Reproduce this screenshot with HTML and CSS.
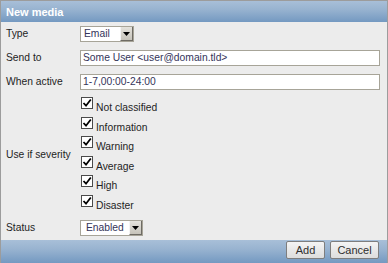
FILE: index.html
```html
<!DOCTYPE html>
<html lang="en">
<head>
    <meta charset="UTF-8">
    <title>New media</title>
    <link rel="stylesheet" href="styles.css">
</head>
<body>
    <div class="dialog">
        <div class="dialog-head">New media</div>

        <div class="dialog-body">
            <div class="row">
                <div class="label">Type</div>
                <div class="field">
                    <div class="select select-type">
                        <span class="select-value">Email</span>
                        <span class="select-btn"><svg width="7" height="4" viewBox="0 0 7 4"><path d="M0 0h7L3.5 4z" fill="#000"/></svg></span>
                    </div>
                </div>
            </div>

            <div class="row">
                <div class="label">Send to</div>
                <div class="field"><div class="text-input">Some User &lt;user@domain.tld&gt;</div></div>
            </div>

            <div class="row">
                <div class="label">When active</div>
                <div class="field"><div class="text-input">1-7,00:00-24:00</div></div>
            </div>

            <div class="row row-severity">
                <div class="label">Use if severity</div>
                <div class="field checks">
                    <div class="check"><span class="box"><svg width="10" height="10" viewBox="0 0 10 10"><path d="M1.5 5l2.5 2.7L8.8 1.5" fill="none" stroke="#000" stroke-width="1.8"/></svg></span><span class="check-text">Not classified</span></div>
                    <div class="check"><span class="box"><svg width="10" height="10" viewBox="0 0 10 10"><path d="M1.5 5l2.5 2.7L8.8 1.5" fill="none" stroke="#000" stroke-width="1.8"/></svg></span><span class="check-text">Information</span></div>
                    <div class="check"><span class="box"><svg width="10" height="10" viewBox="0 0 10 10"><path d="M1.5 5l2.5 2.7L8.8 1.5" fill="none" stroke="#000" stroke-width="1.8"/></svg></span><span class="check-text">Warning</span></div>
                    <div class="check"><span class="box"><svg width="10" height="10" viewBox="0 0 10 10"><path d="M1.5 5l2.5 2.7L8.8 1.5" fill="none" stroke="#000" stroke-width="1.8"/></svg></span><span class="check-text">Average</span></div>
                    <div class="check"><span class="box"><svg width="10" height="10" viewBox="0 0 10 10"><path d="M1.5 5l2.5 2.7L8.8 1.5" fill="none" stroke="#000" stroke-width="1.8"/></svg></span><span class="check-text">High</span></div>
                    <div class="check"><span class="box"><svg width="10" height="10" viewBox="0 0 10 10"><path d="M1.5 5l2.5 2.7L8.8 1.5" fill="none" stroke="#000" stroke-width="1.8"/></svg></span><span class="check-text">Disaster</span></div>
                </div>
            </div>

            <div class="row">
                <div class="label">Status</div>
                <div class="field">
                    <div class="select select-status">
                        <span class="select-value">Enabled</span>
                        <span class="select-btn"><svg width="7" height="4" viewBox="0 0 7 4"><path d="M0 0h7L3.5 4z" fill="#000"/></svg></span>
                    </div>
                </div>
            </div>
        </div>

        <div class="dialog-foot">
            <button class="btn btn-add">Add</button>
            <button class="btn btn-cancel">Cancel</button>
        </div>
    </div>
</body>
</html>
```

FILE: styles.css
```css
* {
    margin: 0;
    padding: 0;
    box-sizing: border-box;
}

body {
    font-family: 'Liberation Sans', Arial, sans-serif;
    font-size: 10.3px;
    color: #1e1e1e;
    background: #ececec;
}

.dialog {
    width: 388px;
    height: 263px;
    border: 1px solid #9c9c9c;
    border-bottom: none;
    background: #ececec;
    display: flex;
    flex-direction: column;
}

.dialog-head {
    height: 24px;
    padding-left: 5px;
    display: flex;
    align-items: center;
    font-size: 11px;
    font-weight: bold;
    color: #fff;
    background: linear-gradient(to bottom, #a8bfd8 0%, #98b3d0 40%, #7499c1 100%);
}

.dialog-body {
    flex: 1;
    padding: 0 7px 0 5px;
}

.row {
    display: grid;
    grid-template-columns: 74px 1fr;
    align-items: center;
    padding: 4px 0;
}

.row-severity {
    padding: 0;
}

.label {
    line-height: 12px;
}

.select {
    display: flex;
    align-items: stretch;
    height: 16px;
    background: #fff;
    border: 1px solid #a7a498;
    color: #34345a;
}

.select-type {
    width: 54px;
}

.select-status {
    width: 63px;
}

.select-value {
    flex: 1;
    padding-left: 3px;
    line-height: 14px;
}

.select-status .select-value {
    padding-left: 5px;
}

.select-btn {
    width: 13px;
    display: flex;
    align-items: center;
    justify-content: center;
    background: linear-gradient(to bottom, #e4e2dc, #c6c3ba);
    border-left: 1px solid #f4f4f4;
    border-right: 1px solid #6e6b64;
    border-bottom: 1px solid #6e6b64;
}

.text-input {
    height: 16px;
    background: #fff;
    border: 1px solid #a7a498;
    padding-left: 2px;
    line-height: 14px;
    color: #34345a;
}

.checks {
    display: flex;
    flex-direction: column;
    padding: 2px 0 3px;
}

.check {
    height: 19.5px;
    display: flex;
    align-items: flex-start;
    gap: 3px;
    padding-left: 1px;
}

.check .box {
    width: 12px;
    height: 12px;
    margin-top: 1px;
    background: #fff;
    border: 1px solid #4a4a4a;
    display: flex;
    align-items: center;
    justify-content: center;
}

.check-text {
    padding-top: 6px;
    line-height: 12px;
}

.dialog-foot {
    height: 25px;
    display: flex;
    justify-content: flex-end;
    align-items: center;
    gap: 5px;
    padding: 0 8px 4px;
    background: linear-gradient(to bottom, #a8bfd8 0%, #98b3d0 40%, #7499c1 100%);
}

.btn {
    height: 18px;
    font-family: 'Liberation Sans', Arial, sans-serif;
    font-size: 11px;
    color: #2e2e2e;
    background: linear-gradient(to bottom, #f4f4f4, #dddddd);
    border: 1px solid #7e7e7e;
    border-radius: 2px;
}

.btn-add {
    width: 39px;
}

.btn-cancel {
    width: 49px;
}
```
